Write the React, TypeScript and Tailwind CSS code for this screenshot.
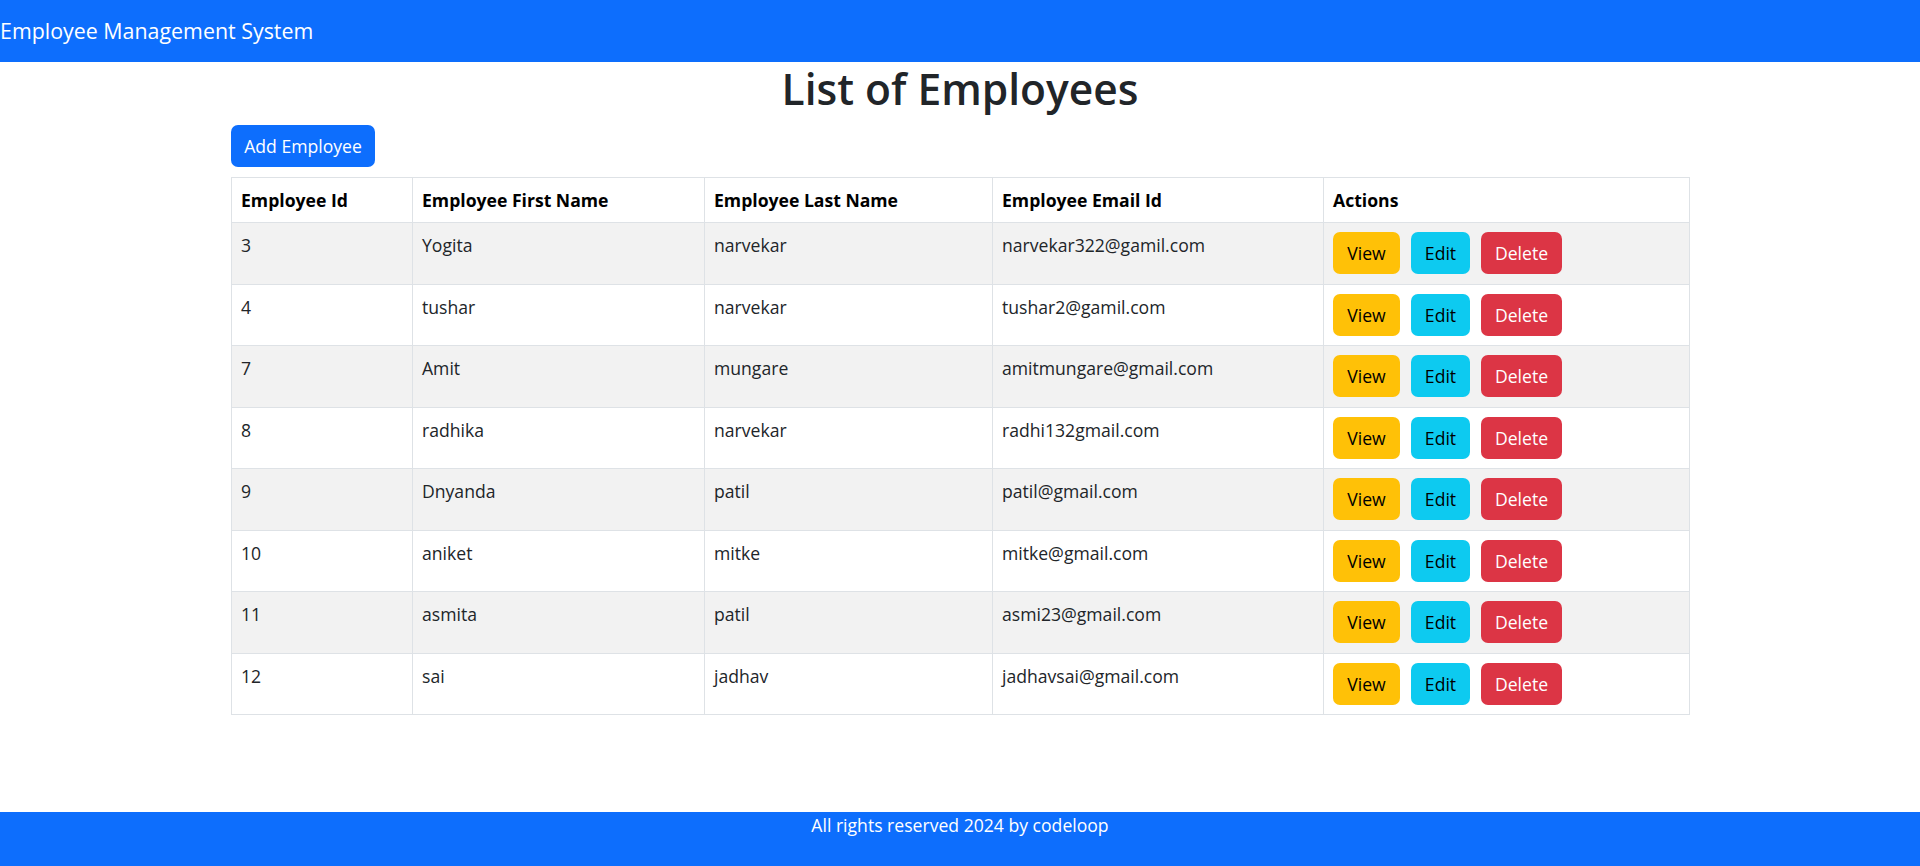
import React from "react";

const employees = [
  { id: 3, first: "Yogita", last: "narvekar", email: "narvekar322@gamil.com" },
  { id: 4, first: "tushar", last: "narvekar", email: "tushar2@gamil.com" },
  { id: 7, first: "Amit", last: "mungare", email: "amitmungare@gmail.com" },
  { id: 8, first: "radhika", last: "narvekar", email: "radhi132gmail.com" },
  { id: 9, first: "Dnyanda", last: "patil", email: "patil@gmail.com" },
  { id: 10, first: "aniket", last: "mitke", email: "mitke@gmail.com" },
  { id: 11, first: "asmita", last: "patil", email: "asmi23@gmail.com" },
  { id: 12, first: "sai", last: "jadhav", email: "jadhavsai@gmail.com" },
];

export default function App() {
  return (
    <div className="min-h-screen flex flex-col bg-white font-['Open_Sans',sans-serif] text-[17.6px] leading-[1.5] text-[#212529]">
      <nav className="h-[62px] bg-[#0d6efd] flex items-center">
        <span className="text-white text-[21.4px] leading-[1.5]">Employee Management System</span>
      </nav>

      <main className="w-[1458px] mx-auto">
        <h1 className="text-center text-[42.5px] leading-[53px] font-semibold text-[#212529] mb-[10px]">
          List of Employees
        </h1>
        <button className="w-[144px] h-[42px] rounded-[7px] bg-[#0d6efd] text-white text-[17.6px] flex items-center justify-center mb-[10px]">
          Add Employee
        </button>
        <table className="w-[1458px] border-collapse table-fixed">
          <colgroup>
            <col className="w-[181px]" />
            <col className="w-[292px]" />
            <col className="w-[288px]" />
            <col className="w-[331px]" />
            <col className="w-[366px]" />
          </colgroup>
          <thead>
            <tr className="text-black font-bold">
              <th className="border border-[#dee2e6] text-left align-bottom px-[9px] py-[9px] leading-[26px]">Employee Id</th>
              <th className="border border-[#dee2e6] text-left align-bottom px-[9px] py-[9px] leading-[26px]">Employee First Name</th>
              <th className="border border-[#dee2e6] text-left align-bottom px-[9px] py-[9px] leading-[26px]">Employee Last Name</th>
              <th className="border border-[#dee2e6] text-left align-bottom px-[9px] py-[9px] leading-[26px]">Employee Email Id</th>
              <th className="border border-[#dee2e6] text-left align-bottom px-[9px] py-[9px] leading-[26px]">Actions</th>
            </tr>
          </thead>
          <tbody>
            {employees.map((e, i) => (
              <tr key={e.id} className={i % 2 === 0 ? "bg-[#f2f2f2]" : "bg-white"}>
                <td className="border border-[#dee2e6] align-top px-[9px] py-[9.25px] leading-[26px]">{e.id}</td>
                <td className="border border-[#dee2e6] align-top px-[9px] py-[9.25px] leading-[26px]">{e.first}</td>
                <td className="border border-[#dee2e6] align-top px-[9px] py-[9.25px] leading-[26px]">{e.last}</td>
                <td className="border border-[#dee2e6] align-top px-[9px] py-[9.25px] leading-[26px]">{e.email}</td>
                <td className="border border-[#dee2e6] align-top px-[9px] py-[9.25px]">
                  <div className="flex gap-[11px]">
                    <button className="w-[67px] h-[42px] rounded-[7px] bg-[#ffc107] text-black flex items-center justify-center">View</button>
                    <button className="w-[59px] h-[42px] rounded-[7px] bg-[#0dcaf0] text-black flex items-center justify-center">Edit</button>
                    <button className="w-[81px] h-[42px] rounded-[7px] bg-[#dc3545] text-white flex items-center justify-center">Delete</button>
                  </div>
                </td>
              </tr>
            ))}
          </tbody>
        </table>
      </main>

      <footer className="mt-auto h-[54px] bg-[#0d6efd] text-white text-center leading-[26px]">
        All rights reserved 2024 by codeloop
      </footer>
    </div>
  );
}
